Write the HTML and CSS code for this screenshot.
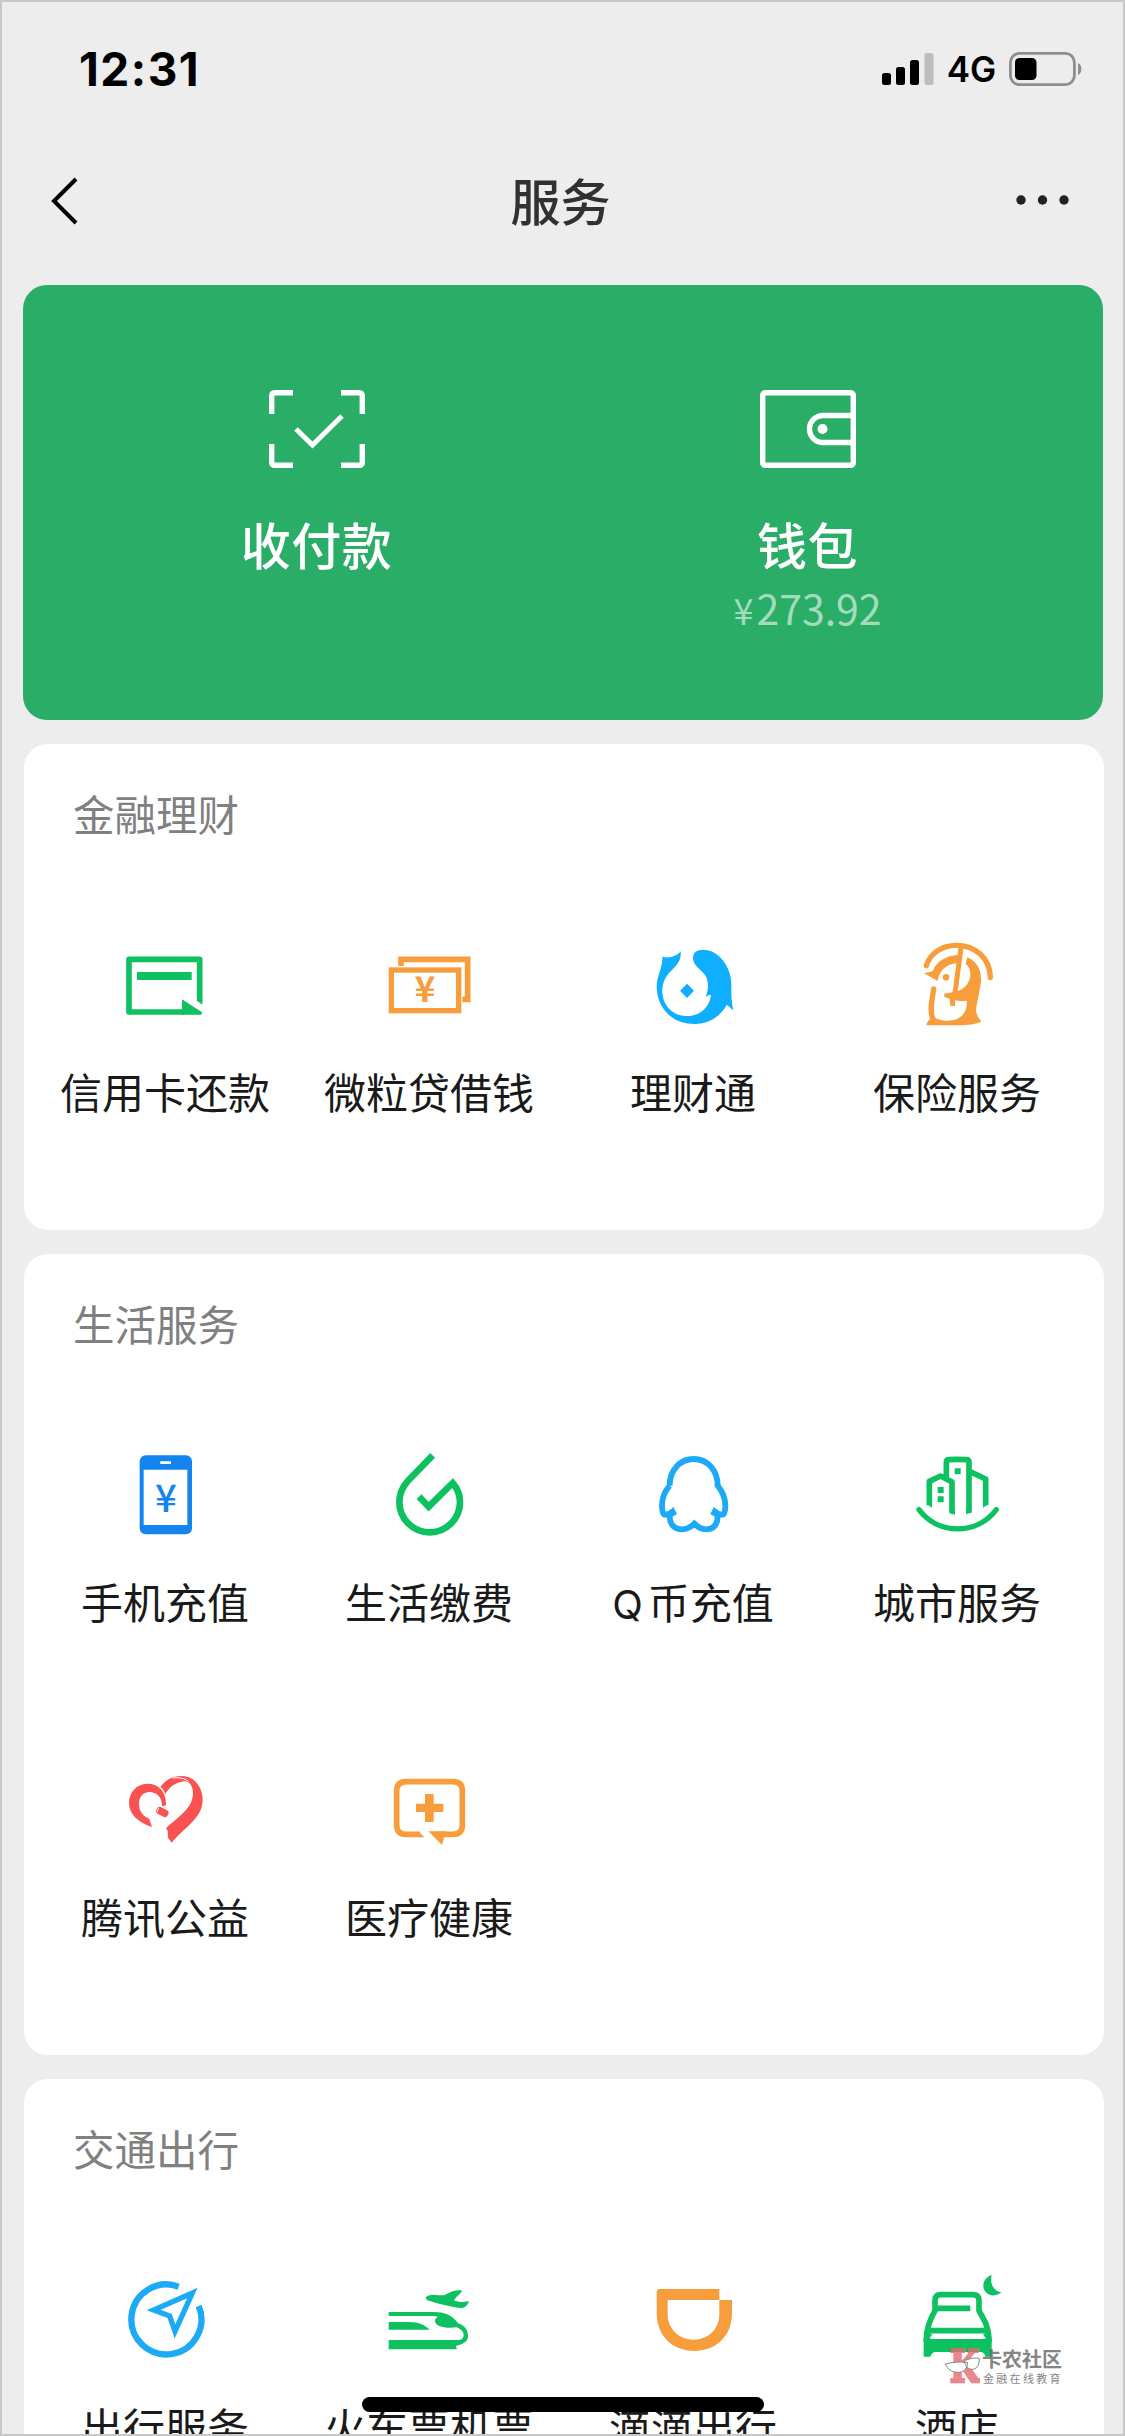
FILE: index.html
```html
<!DOCTYPE html>
<html lang="zh-CN">
<head>
<meta charset="utf-8">
<title>服务</title>
<link rel="stylesheet" href="styles.css">
</head>
<body>
<div class="screen">
  <header class="status">
    <span class="time">12:31</span>
    <div class="status-right">
      <svg class="signal" width="52" height="32" viewBox="0 0 52 32"><rect x="0" y="20" width="9" height="12" rx="2.5"/><rect x="14" y="14" width="9" height="18" rx="2.5"/><rect x="28" y="7" width="9" height="25" rx="2.5"/><rect x="42.5" y="0" width="9" height="32" rx="2.5" fill="#bdbdbd"/></svg>
      <span class="net">4G</span>
      <svg class="battery" width="73" height="34" viewBox="0 0 73 34"><rect x="1.4" y="1.4" width="64" height="31.2" rx="9" fill="none" stroke="#8e8e8e" stroke-width="2.8"/><rect x="6" y="6" width="21.5" height="22" rx="4.5"/><path d="M69 11C73.500 12.500 73.500 21.500 69 23Z" fill="#8e8e8e"/></svg>
    </div>
  </header>
  <nav class="nav">
    <svg width="30" height="48" viewBox="0 0 30 48"><path d="M26 2L4 24L26 46" fill="none" stroke="#000" stroke-width="4"/></svg>
    <h1>服务</h1>
    <svg class="more" width="56" height="12" viewBox="0 0 56 12" fill="#222"><circle cx="6" cy="6" r="4.700"/><circle cx="27.500" cy="6" r="4.700"/><circle cx="49" cy="6" r="4.700"/></svg>
  </nav>

  <main>
    <section class="pay">
      <div class="pay-item">
        <svg width="96" height="78" viewBox="0 0 96 78" fill="none" stroke="#fff" stroke-width="5.400"><path d="M2.700 24V6Q2.700 2.700 6 2.700H24M72 2.700H90Q93.300 2.700 93.300 6V24M93.300 54V72Q93.300 75.300 90 75.300H72M24 75.300H6Q2.700 75.300 2.700 72V54"/><path d="M27 39L43.500 55L73 26" stroke-width="5"/></svg>
        <strong>收付款</strong>
      </div>
      <div class="pay-item">
        <svg width="96" height="78" viewBox="0 0 96 78" fill="none" stroke="#fff" stroke-width="5.400"><rect x="2.700" y="2.700" width="90.600" height="72.600" rx="2.500"/><path d="M93 25.500H63A13.500 13.500 0 0 0 63 52.500H93"/><circle cx="62.500" cy="39" r="5" fill="#fff" stroke="none"/></svg>
        <strong>钱包</strong>
        <span class="amount"><span class="yen">¥</span>273.92</span>
      </div>
    </section>

    <section class="card">
      <h2>金融理财</h2>
      <div class="grid">
        <div class="item">
          <svg class="green" viewBox="0 0 360 360"><path class="line" d="M284 232V106H72V264H240" stroke-width="17" stroke-linejoin="round"/><path d="M276 225H292V242L276 230ZM96 144H260V168H96ZM231 226L290 264Q293 272 286 272H231Z"/></svg>
          <span>信用卡还款</span>
        </div>
        <div class="item">
          <svg class="orange" viewBox="792 0 360 360"><path class="line" d="M888 126V106H1088V226H1072" stroke-width="17"/><rect class="line" x="859" y="138" width="202" height="122" stroke-width="16"/><text x="960" y="233" font-size="106" font-weight="700">¥</text></svg>
          <span>微粒贷借钱</span>
        </div>
        <div class="item">
          <svg class="sky" viewBox="0 0 360 360"><path d="M88 98C105 104 130 98 143 82C146 110 130 125 115 140C95 158 88 180 88 200C88 245 120 276 162 276C200 276 230 250 234 212C228 213 222 215 218 219C228 195 228 165 212 148C195 130 180 120 180 102C180 85 192 77 210 77C255 77 294 125 295 180C295 215 295 230 301 259C295 255 288 245 281 243C260 280 225 300 185 300C115 300 70 250 71 185C72 155 90 130 88 98ZM162 179L183 200L162 222L141 200Z"/></svg>
          <span>理财通</span>
        </div>
        <div class="item">
          <svg class="orange" viewBox="792 0 360 360"><path class="line" d="M880 125C890 90 925 64 970 64C1025 64 1070 100 1072 160M902 195C898 225 888 260 900 284" stroke-width="16" stroke-linecap="round"/><path class="line" d="M985 64L965 215" stroke-width="15"/><path d="M872 147C885 146 892 144 900 140C910 112 940 94 976 93L972 118C940 120 918 140 914 171ZM1003 100C1035 115 1046 140 1044 175L1030 250C1027 272 1035 278 1045 292C1030 302 1000 304 980 304H880C883 290 890 285 900 278C920 290 935 290 945 290C980 290 1002 270 1002 230C985 232 975 231 967 228L966 246H952L950 224L934 219V209L960 205C990 200 1012 180 1012 150C1012 135 1005 125 998 120Z"/><circle cx="939" cy="160" r="10"/></svg>
          <span>保险服务</span>
        </div>
      </div>
    </section>

    <section class="card">
      <h2>生活服务</h2>
      <div class="grid">
        <div class="item">
          <svg class="blue" viewBox="195 42 360 360"><rect x="299" y="106" width="157" height="237" rx="18"/><path d="M311 149H442V315H311ZM361 124H393V132H361Z" fill="#fff"/><text x="378" y="276" font-size="115" font-weight="500">¥</text></svg>
          <span>手机充值</span>
        </div>
        <div class="item">
          <svg class="green" viewBox="987 42 360 360"><path class="line" d="M1178 106L1104 182C1085 203 1078 222 1078 246A91 91 0 0 0 1169 337A91 91 0 0 0 1260 246C1260 225 1252 205 1238 189L1166 260L1137 230" stroke-width="20"/></svg>
          <span>生活缴费</span>
        </div>
        <div class="item">
          <svg class="sky2" viewBox="159 42 360 360"><path class="line" d="M269 197C269 150 300 117 341 117C382 117 413 150 413 197C428 215 436 235 436 258C436 275 432 285 425 284C415 283 408 279 402 272M269 197C253 215 246 235 246 258C246 275 250 285 257 284C267 283 274 279 280 272M269 290C270 320 290 328 306 328C325 328 335 320 343 311C352 320 362 328 378 328C395 328 412 320 413 290" stroke-width="17.500"/><path d="M280 260L291 282L268 296L262 282ZM402 260L391 282L414 296L420 282Z"/></svg>
          <span><span class="latin">Q</span>币充值</span>
        </div>
        <div class="item">
          <svg class="green" viewBox="951 42 360 360"><path class="line" d="M1048 256V184L1082 168L1116 186V275M1099 175V127Q1099 119 1107 119Q1132 117 1159 119Q1167 119 1167 127V275M1170 155L1217 177V255" stroke-width="17" stroke-linejoin="round"/><path class="line" d="M1017 269C1075 346 1190 346 1249 269" stroke-width="16" stroke-linecap="round"/><path d="M1124 145H1142V163H1124ZM1073 201H1091V219H1073ZM1073 229H1091V247H1073ZM1040 252H1056V263ZM1108 270H1125V284L1108 280ZM1158 270H1175V278L1158 282ZM1209 250H1225V253L1209 263Z"/></svg>
          <span>城市服务</span>
        </div>
        <div class="item">
          <svg class="red" viewBox="195 27 360 360"><path d="M336 261C290 245 267 220 267 188C267 155 292 131 323 131C355 131 380 155 378 196L366 199C367 172 350 156 328 156C308 156 297 172 297 192C297 215 310 228 328 237ZM361 141C375 120 398 108 425 108C462 108 488 140 488 180C488 235 430 265 395 308L384 293L383 272L378 265C415 230 459 205 459 160C459 135 445 122 432 124C405 128 390 140 376 162C372 152 368 146 361 141Z"/><path d="M398 114C415 112 432 114 446 124" fill="none" stroke="#fff" stroke-width="3"/><rect x="348" y="205" width="38" height="22" rx="9" transform="rotate(28 367 216)"/><path d="M356 204L351 216" stroke="#fff" stroke-width="3"/></svg>
          <span>腾讯公益</span>
        </div>
        <div class="item">
          <svg class="orange" viewBox="987 27 360 360"><path class="line" d="M1140 283H1098Q1070 283 1070 255V153Q1070 125 1098 125H1239Q1267 125 1267 153V255Q1267 283 1239 283H1190" stroke-width="17"/><path d="M1165 274H1218V287L1213 291L1206 315ZM1136 274.500L1153 291.500H1135ZM1155 162H1181V191H1210V216H1181V246H1155V216H1128V191H1155Z"/></svg>
          <span>医疗健康</span>
        </div>
      </div>
    </section>

    <section class="card">
      <h2>交通出行</h2>
      <div class="grid">
        <div class="item">
          <svg class="sky2" viewBox="195 57 360 360"><path class="line" d="M416 140A105 105 0 1 0 476 198" stroke-width="19"/><path class="line" d="M457 159L341 210L389 228L405 274Z" stroke-width="16" stroke-miterlimit="6"/></svg>
          <span>出行服务</span>
        </div>
        <div class="item">
          <svg class="green" viewBox="987 57 360 360"><path d="M1046 216H1180C1215 216 1235 225 1255 250C1275 258 1284 270 1284 288C1284 305 1270 312 1247 318L1251 328H1046V300H1252C1265 300 1271 294 1271 285C1271 275 1262 267 1250 262C1215 267 1185 258 1185 243C1185 235 1190 232 1195 230L1180 228H1046ZM1046 246H1105C1140 246 1155 256 1169 269H1046ZM1157 172C1165 163 1178 164 1212 166C1230 155 1248 147 1267 152C1260 162 1248 170 1242 181C1255 187 1265 188 1287 183C1282 200 1272 204 1262 204C1230 200 1190 190 1160 180Z"/></svg>
          <span>火车票机票</span>
        </div>
        <div class="item">
          <svg class="orange" viewBox="0 0 360 360"><path fill-rule="evenodd" d="M81 90H259V123H297V163C297 230 250 276 184 276C118 276 71 230 71 163V100Q71 90 81 90ZM104 123V165C104 210 138 242 182 242C226 242 259 210 259 165V123Z"/></svg>
          <span>滴滴出行</span>
        </div>
        <div class="item">
          <svg class="green" viewBox="0 0 360 360"><path class="line" d="M88 250V240C88 205 100 180 114 155V125Q114 107 132 107H228Q246 107 246 125V155C260 180 276 205 276 240V250" stroke-width="17"/><path class="line" d="M114 148H220M95 215H268" stroke-width="17"/><path d="M80 238H95L106 240H258L270 238H284V293H265Q262 279 250 279H115Q105 279 100 293H80ZM95 222L106 226L95 242ZM270 222L258 226L270 242ZM284 48C278 75 290 97 313 100C300 112 275 114 263 95C253 78 262 55 284 48Z"/></svg>
          <span>酒店</span>
        </div>
      </div>
    </section>
  </main>

  <div class="watermark">
    <svg width="36" height="36" viewBox="0 0 108 108"><text class="wm-k" x="61" y="101" textLength="88" lengthAdjust="spacingAndGlyphs">K</text><path d="M4 48C26 42 45 40 71 44C69 66 56 74 40 73C22 73 12 64 4 48ZM62 38C80 30 95 28 106 32C106 52 98 64 84 64C72 64 62 54 62 38Z" fill="#fff" stroke="#666" stroke-width="3"/></svg>
    <div class="wm-text"><b>卡农社区</b><span>金融在线教育</span></div>
  </div>
  <div class="home-bar"></div>
  <div class="frame"></div>
</div>
</body>
</html>
```
FILE: styles.css
```css
* { box-sizing: border-box; }
body {
  margin: 0;
  background: #ededed;
  font-family: "Noto Sans CJK SC", "Noto Sans", sans-serif;
  color: #1a1a1a;
}
.screen {
  position: relative;
  width: 1125px;
  height: 2436px;
  overflow: hidden;
  background: #ededed;
}
svg { display: block; flex: none; }

.status {
  display: flex;
  justify-content: space-between;
  align-items: center;
  height: 138px;
  padding: 0 43px 0 79px;
}
.time {
  font: 700 46px/54px "Inter", sans-serif;
  letter-spacing: 1.500px;
  color: #000;
}
.status-right { display: flex; align-items: center; }
.net {
  width: 75px;
  text-align: center;
  font: 600 35px/40px "Inter", sans-serif;
  color: #000;
}

.nav {
  display: grid;
  grid-template-columns: 1fr auto 1fr;
  align-items: center;
  height: 126px;
  padding: 0 54px 0 50px;
}
.nav h1 {
  margin: 0 0 5px;
  font-size: 50px;
  line-height: 60px;
  font-weight: 500;
  color: #303133;
}
.more { justify-self: end; margin-bottom: 3px; }

main {
  display: flex;
  flex-direction: column;
  gap: 24px;
  padding: 21px 21px 0 24px;
}
.pay {
  display: flex;
  height: 435px;
  margin: 0 1px 0 -1px;
  padding: 105px 50px 0 48px;
  border-radius: 24px;
  background: #2aad67;
}
.pay-item {
  flex: 1;
  display: flex;
  flex-direction: column;
  align-items: center;
  color: #fff;
}
.pay-item strong {
  margin-top: 45px;
  font-size: 50px;
  line-height: 60px;
  font-weight: 500;
  letter-spacing: .5px;
}
.amount {
  margin-top: 9px;
  font-size: 41px;
  line-height: 50px;
  color: #a4dbbd;
}
.yen { font-size: 36px; margin-right: 3px; }

.card {
  border-radius: 24px;
  background: #fff;
  padding: 0 15px 0 9px;
}
.card h2 {
  margin: 0;
  padding: 44px 0 0 40px;
  height: 171px;
  font-size: 41.500px;
  line-height: 50px;
  font-weight: 400;
  color: #808080;
}
.grid {
  display: grid;
  grid-template-columns: repeat(4, 264px);
  grid-auto-rows: 315px;
}
.item {
  display: flex;
  flex-direction: column;
  align-items: center;
  padding-top: 9px;
}
.item > svg { width: 120px; height: 120px; fill: currentColor; }
.item > span {
  margin-top: 22px;
  font-size: 42px;
  line-height: 50px;
  white-space: nowrap;
}
.item text {
  font-family: "Noto Sans CJK SC", sans-serif;
  text-anchor: middle;
}
.latin {
  margin-right: 5px;
  font-family: "Inter", sans-serif;
  font-size: 40px;
}
.line { fill: none; stroke: currentColor; }
.green { color: #0dc160; }
.orange { color: #f89d3c; }
.sky { color: #10aeff; }
.sky2 { color: #1caaf7; }
.blue { color: #1485ee; }
.red { color: #fa5151; }

.watermark {
  position: absolute;
  left: 944px;
  top: 2348px;
  display: flex;
  align-items: flex-start;
  gap: 2px;
  opacity: .8;
}
.wm-k {
  font: 700 132px "DejaVu Serif", serif;
  text-anchor: middle;
  fill: #e46a75;
  stroke: #e46a75;
  stroke-width: 8px;
}
.wm-text { display: flex; flex-direction: column; color: #666; }
.wm-text b { font-size: 20px; line-height: 22px; font-weight: 700; }
.wm-text span { margin-top: 1px; padding-left: 1px; font-size: 11px; line-height: 14px; letter-spacing: 2.300px; }

.home-bar {
  position: absolute;
  left: 362px;
  top: 2397px;
  width: 402px;
  height: 15px;
  border-radius: 8px;
  background: #000;
}
.frame {
  position: absolute;
  inset: 0;
  border: 2px solid #c8c8c8;
}
```
